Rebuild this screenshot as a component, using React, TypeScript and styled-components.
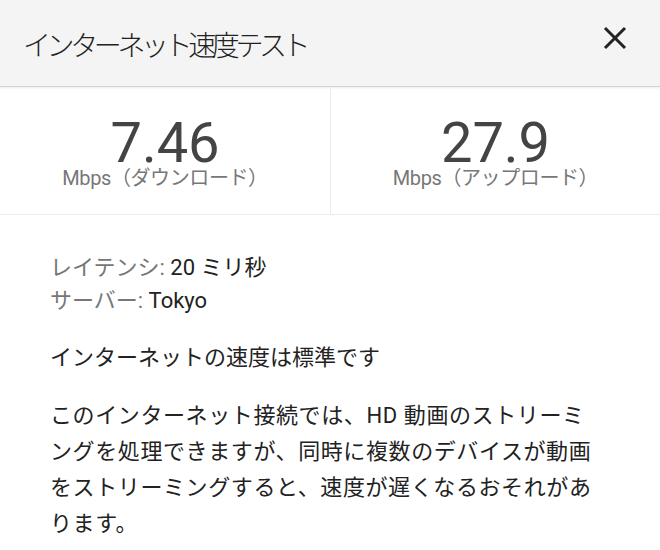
import styled, { createGlobalStyle } from "styled-components";

const GlobalStyle = createGlobalStyle`
  body {
    margin: 0;
    background: #ffffff;
    font-family: Roboto, "Noto Sans CJK JP", sans-serif;
  }
`;

const stats = [
  { value: "7.46", label: "Mbps（ダウンロード）" },
  { value: "27.9", label: "Mbps（アップロード）" },
];

export const App = () => {
  return (
    <Panel>
      <GlobalStyle />
      {/* header */}
      <Header>
        <Title>インターネット速度テスト</Title>
        <CloseButton aria-label="閉じる">
          <svg width="24" height="24" viewBox="0 0 24 24">
            <path
              d="M2 2 L22 22 M22 2 L2 22"
              stroke="#222"
              strokeWidth="3"
              fill="none"
            />
          </svg>
        </CloseButton>
      </Header>
      {/* results */}
      <Stats>
        {stats.map((s, index) => (
          <Stat key={index} $divider={index > 0}>
            <Value>{s.value}</Value>
            <Unit>{s.label}</Unit>
          </Stat>
        ))}
      </Stats>
      {/* details */}
      <Body>
        <Meta>
          <MetaLine>
            <MetaKey>レイテンシ: </MetaKey>20 ミリ秒
          </MetaLine>
          <MetaLine>
            <MetaKey>サーバー: </MetaKey>Tokyo
          </MetaLine>
        </Meta>
        <Text>インターネットの速度は標準です</Text>
        <Paragraph>
          このインターネット接続では、HD 動画のストリーミ
          <br />
          ングを処理できますが、同時に複数のデバイスが動画
          <br />
          をストリーミングすると、速度が遅くなるおそれがあ
          <br />
          ります。
        </Paragraph>
      </Body>
    </Panel>
  );
};

export default App;

const Panel = styled.div`
  width: 660px;
  height: 550px;
  background: #fff;
  overflow: hidden;
`;

const Header = styled.header`
  height: 87px;
  box-sizing: border-box;
  display: flex;
  align-items: center;
  justify-content: space-between;
  padding: 0 33px 0 23px;
  background: #f4f4f4;
  border-bottom: 1px solid #d4d4d4;
  box-shadow: 0 1px 2px rgba(0, 0, 0, 0.08);
`;

const Title = styled.h1`
  margin: 2px 0 0;
  font-size: 28px;
  font-weight: 300;
  letter-spacing: -4.4px;
  color: #222;
`;

const CloseButton = styled.button`
  display: flex;
  padding: 0;
  margin-bottom: 10px;
  border: none;
  background: none;
  cursor: pointer;
`;

const Stats = styled.section`
  display: grid;
  grid-template-columns: 1fr 1fr;
  border-bottom: 1px solid #ececec;
`;

const Stat = styled.div<{ $divider?: boolean }>`
  height: 127px;
  box-sizing: border-box;
  display: flex;
  flex-direction: column;
  align-items: center;
  padding-top: 35px;
  border-left: ${(p) => (p.$divider ? "1px solid #ececec" : "none")};
`;

const Value = styled.div`
  font-size: 56px;
  line-height: 42px;
  height: 42px;
  color: #444;
`;

const Unit = styled.div`
  margin-top: 2px;
  font-size: 20px;
  line-height: 24px;
  color: #777;
  letter-spacing: -0.4px;
`;

const Body = styled.section`
  padding: 36px 50px 0;
  color: #222;
  font-size: 22px;
`;

const Meta = styled.div`
  margin-bottom: 23px;
`;

const MetaLine = styled.div`
  line-height: 33px;
`;

const MetaKey = styled.span`
  color: #777;
`;

const Text = styled.p`
  margin: 0 0 22px;
  line-height: 36px;
`;

const Paragraph = styled.p`
  margin: 0;
  line-height: 36px;
  white-space: nowrap;
  letter-spacing: 0.6px;
`;
